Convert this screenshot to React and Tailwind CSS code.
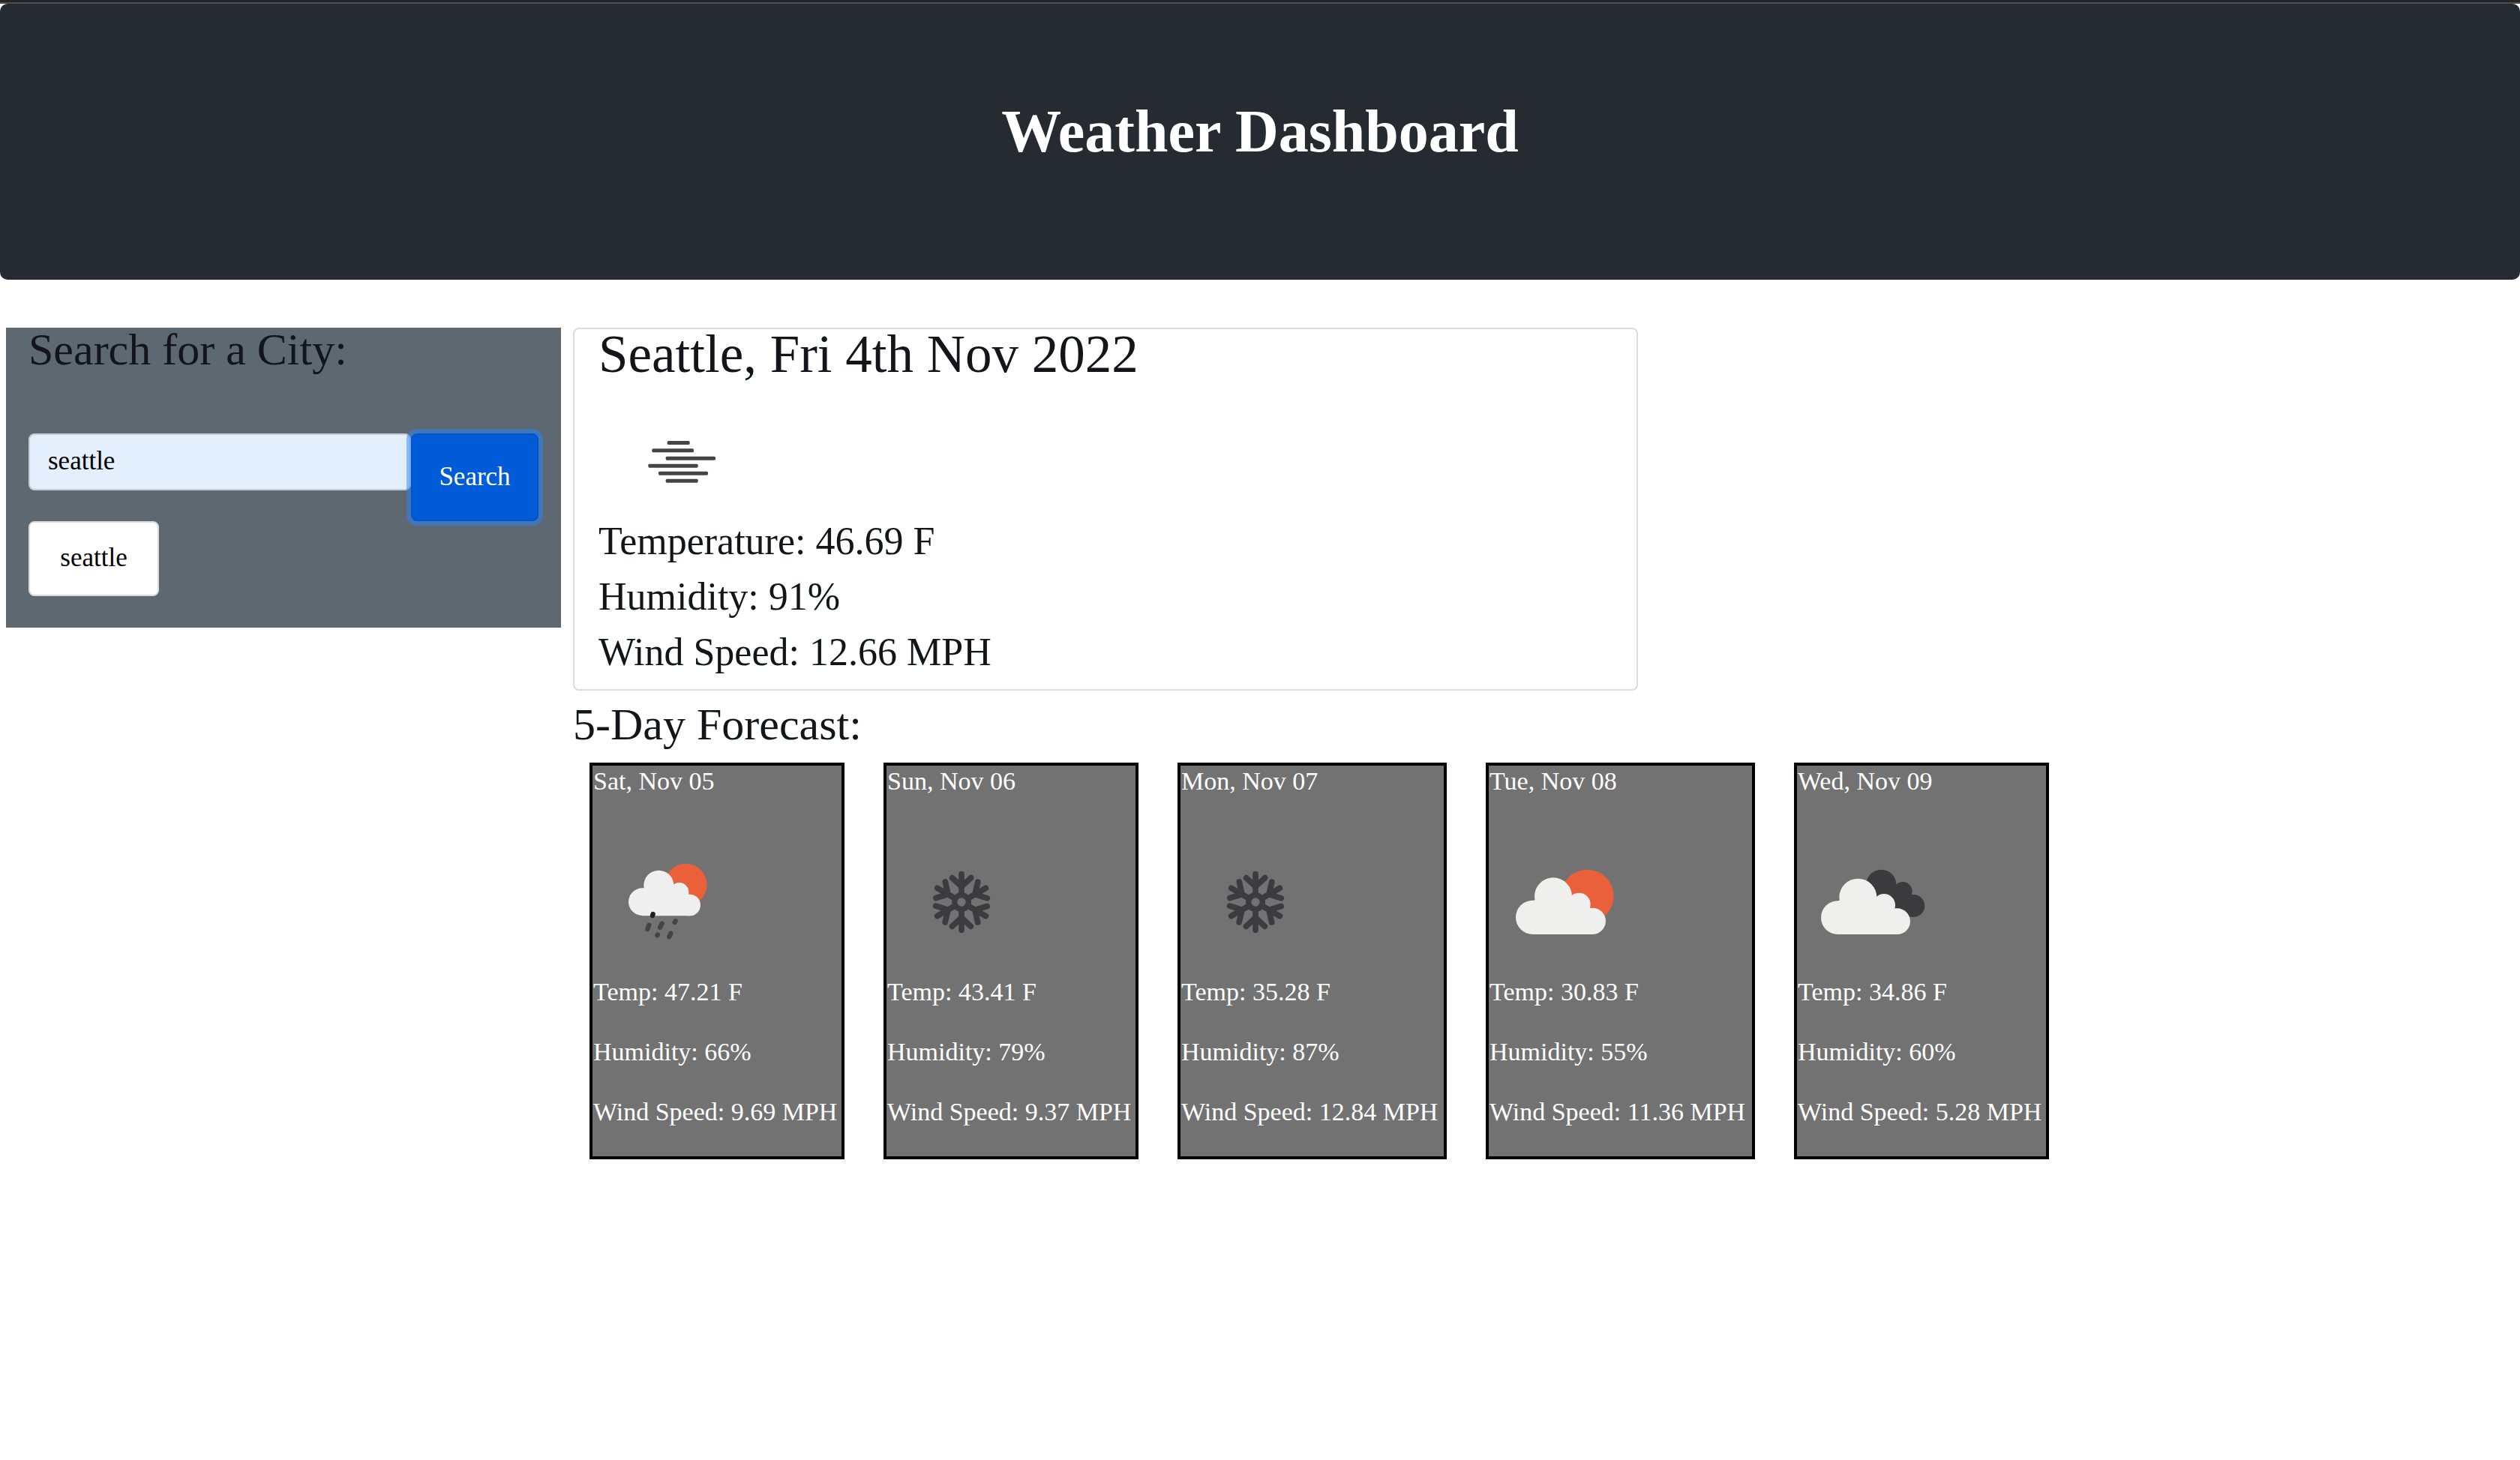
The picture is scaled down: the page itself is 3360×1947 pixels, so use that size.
import React, { useState } from "react";

function SunShower() {
  return (
    <svg viewBox="0 0 200 196" className="block h-[196px] w-[200px]" role="img" aria-label="Rain showers">
      <g transform="translate(30 39) scale(0.3333)">
        <circle cx="283" cy="114" r="85" fill="#e9603b" />
        <g fill="#efefef">
          <circle cx="109" cy="182" r="55" />
          <circle cx="175" cy="116" r="60" />
          <circle cx="257" cy="143" r="38" />
          <circle cx="299" cy="195" r="43" />
          <polygon points="109,238 109,128 175,116 233,113 257,143 293,152 299,152 299,238" />
        </g>
        <g stroke="#444446" strokeWidth="19" strokeLinecap="round">
          <line x1="152" y1="231" x2="150" y2="237" stroke="#1f2022" />
          <line x1="136" y1="275" x2="130" y2="291" />
          <line x1="188" y1="269" x2="180" y2="284" />
          <line x1="242" y1="259" x2="239" y2="264" />
          <line x1="171" y1="313" x2="169" y2="316" />
          <line x1="223" y1="308" x2="217" y2="322" />
        </g>
      </g>
    </svg>
  );
}

function Snow() {
  return (
    <svg viewBox="0 0 200 196" className="block h-[196px] w-[200px]" role="img" aria-label="Snow">
      <g
        transform="translate(100 100) scale(0.3333)"
        fill="none"
        stroke="#3c3c3e"
        strokeWidth="23"
        strokeLinecap="round"
      >
        <circle r="28" strokeWidth="22" />
        {[0, 60, 120, 180, 240, 300].map((angle) => (
          <path key={angle} transform={`rotate(${angle})`} d="M0 -34V-112M-37 -97L0 -62L38 -97" />
        ))}
      </g>
    </svg>
  );
}

function PartlyCloudy() {
  return (
    <svg viewBox="0 0 200 196" className="block h-[196px] w-[200px]" role="img" aria-label="Partly cloudy">
      <g transform="translate(15 39) scale(0.3333)">
        <circle cx="349" cy="159" r="106" fill="#e9603b" />
        <g fill="#efefee">
          <circle cx="131" cy="244" r="68" />
          <circle cx="213" cy="160" r="75" />
          <circle cx="316" cy="192" r="46" />
          <circle cx="370" cy="259" r="53" />
          <polygon points="130,312 130,177 213,160 288,158 316,192 362,208 370,208 370,312" />
        </g>
      </g>
    </svg>
  );
}

function BrokenClouds() {
  return (
    <svg viewBox="0 0 200 196" className="block h-[196px] w-[200px]" role="img" aria-label="Broken clouds">
      <g transform="translate(14 39) scale(0.3333)">
        <g fill="#3b3b3d">
          <circle cx="295" cy="113" r="60" />
          <circle cx="381" cy="140" r="38" />
          <circle cx="424" cy="198" r="45" />
          <polygon points="240,95 355,112 419,153 424,242 350,242" />
        </g>
        <g fill="#efefee">
          <circle cx="121" cy="245" r="67" />
          <circle cx="202" cy="164" r="75" />
          <circle cx="306" cy="195" r="45" />
          <circle cx="359" cy="260" r="52" />
          <polygon points="121,312 121,178 202,164 276,161 306,195 350,209 359,209 359,312" />
        </g>
      </g>
    </svg>
  );
}

function Mist() {
  return (
    <svg viewBox="0 0 200 180" className="block h-[180px] w-[200px]" role="img" aria-label="Mist">
      <g transform="translate(52 65) scale(0.3333)" fill="#444446">
        <rect x="119" y="54" width="90" height="15" rx="5" />
        <rect x="58" y="85" width="167" height="15" rx="5" />
        <rect x="113" y="116" width="199" height="15" rx="5" />
        <rect x="43" y="146" width="199" height="15" rx="5" />
        <rect x="84" y="176" width="198" height="15" rx="5" />
        <rect x="113" y="206" width="129" height="15" rx="5" />
      </g>
    </svg>
  );
}

const forecast = [
  { day: "Sat, Nov 05", Icon: SunShower, temp: "47.21", humidity: 66, wind: "9.69" },
  { day: "Sun, Nov 06", Icon: Snow, temp: "43.41", humidity: 79, wind: "9.37" },
  { day: "Mon, Nov 07", Icon: Snow, temp: "35.28", humidity: 87, wind: "12.84" },
  { day: "Tue, Nov 08", Icon: PartlyCloudy, temp: "30.83", humidity: 55, wind: "11.36" },
  { day: "Wed, Nov 09", Icon: BrokenClouds, temp: "34.86", humidity: 60, wind: "5.28" },
];

function ForecastCard({ day, Icon, temp, humidity, wind }) {
  return (
    <li className="border-4 border-black bg-[#727272] pb-[35px] text-[34px] whitespace-nowrap text-white">
      <h3 className="mb-10 px-px leading-[42px]">{day}</h3>
      <Icon />
      <div className="flex flex-col gap-8 px-px leading-[48px]">
        <p>Temp: {temp} F</p>
        <p>Humidity: {humidity}%</p>
        <p>Wind Speed: {wind} MPH</p>
      </div>
    </li>
  );
}

export default function App() {
  const [city, setCity] = useState("seattle");

  return (
    <div className="min-h-screen bg-white font-['Liberation_Serif',serif] text-[#12161a]">
      <div className="h-[5px] border-b-2 border-[#4d4d4f] bg-[#252528]" />
      <header className="rounded-[10px] bg-[#262a31] pt-[122px] pb-[150px] text-center">
        <h1 className="text-[80px] leading-[96px] font-bold text-white">Weather Dashboard</h1>
      </header>

      <div className="mt-16 flex items-start gap-4 pl-2">
        <aside className="w-[740px] shrink-0 bg-[#5e6870] px-[30px] pb-[42px]">
          <h2 className="text-[60px] leading-[58px]">
            <label htmlFor="city">Search for a City:</label>
          </h2>
          <form className="mt-[83px] flex items-start" onSubmit={(event) => event.preventDefault()}>
            <input
              id="city"
              type="text"
              value={city}
              onChange={(event) => setCity(event.target.value)}
              className="h-[76px] w-[510px] rounded-lg border-2 border-[#c6ccd3] bg-[#e3effd] px-6 pb-0.5 text-[35px] text-black outline-none"
            />
            <button
              type="submit"
              className="h-[117px] w-[170px] rounded-lg border-2 border-[#0055cb] bg-[#005bd8] text-[35px] text-white shadow-[0_0_0_6px_rgba(38,131,255,0.5)]"
            >
              Search
            </button>
          </form>
          <button
            type="button"
            className="block h-[100px] w-[174px] rounded-lg border-2 border-[#dbdbdb] bg-white pb-0.5 text-[35px] text-black"
          >
            seattle
          </button>
        </aside>

        <main className="min-w-0 flex-1">
          <section className="w-full max-w-[1420px] rounded-lg border-2 border-[#dcdcdc] px-8 pb-3">
            <h2 className="text-[71px] leading-[66px]">Seattle, Fri 4th Nov 2022</h2>
            <Mist />
            <div className="text-[52px] leading-[74px]">
              <p>Temperature: 46.69 F</p>
              <p>Humidity: 91%</p>
              <p>Wind Speed: 12.66 MPH</p>
            </div>
          </section>

          <h2 className="mt-2 text-[60px] leading-[74px]">5-Day Forecast:</h2>
          <ul className="mt-[14px] grid grid-cols-[340px_340px_359px_359px_340px] gap-[52px] pl-[22px]">
            {forecast.map((entry) => (
              <ForecastCard key={entry.day} {...entry} />
            ))}
          </ul>
        </main>
      </div>
    </div>
  );
}
